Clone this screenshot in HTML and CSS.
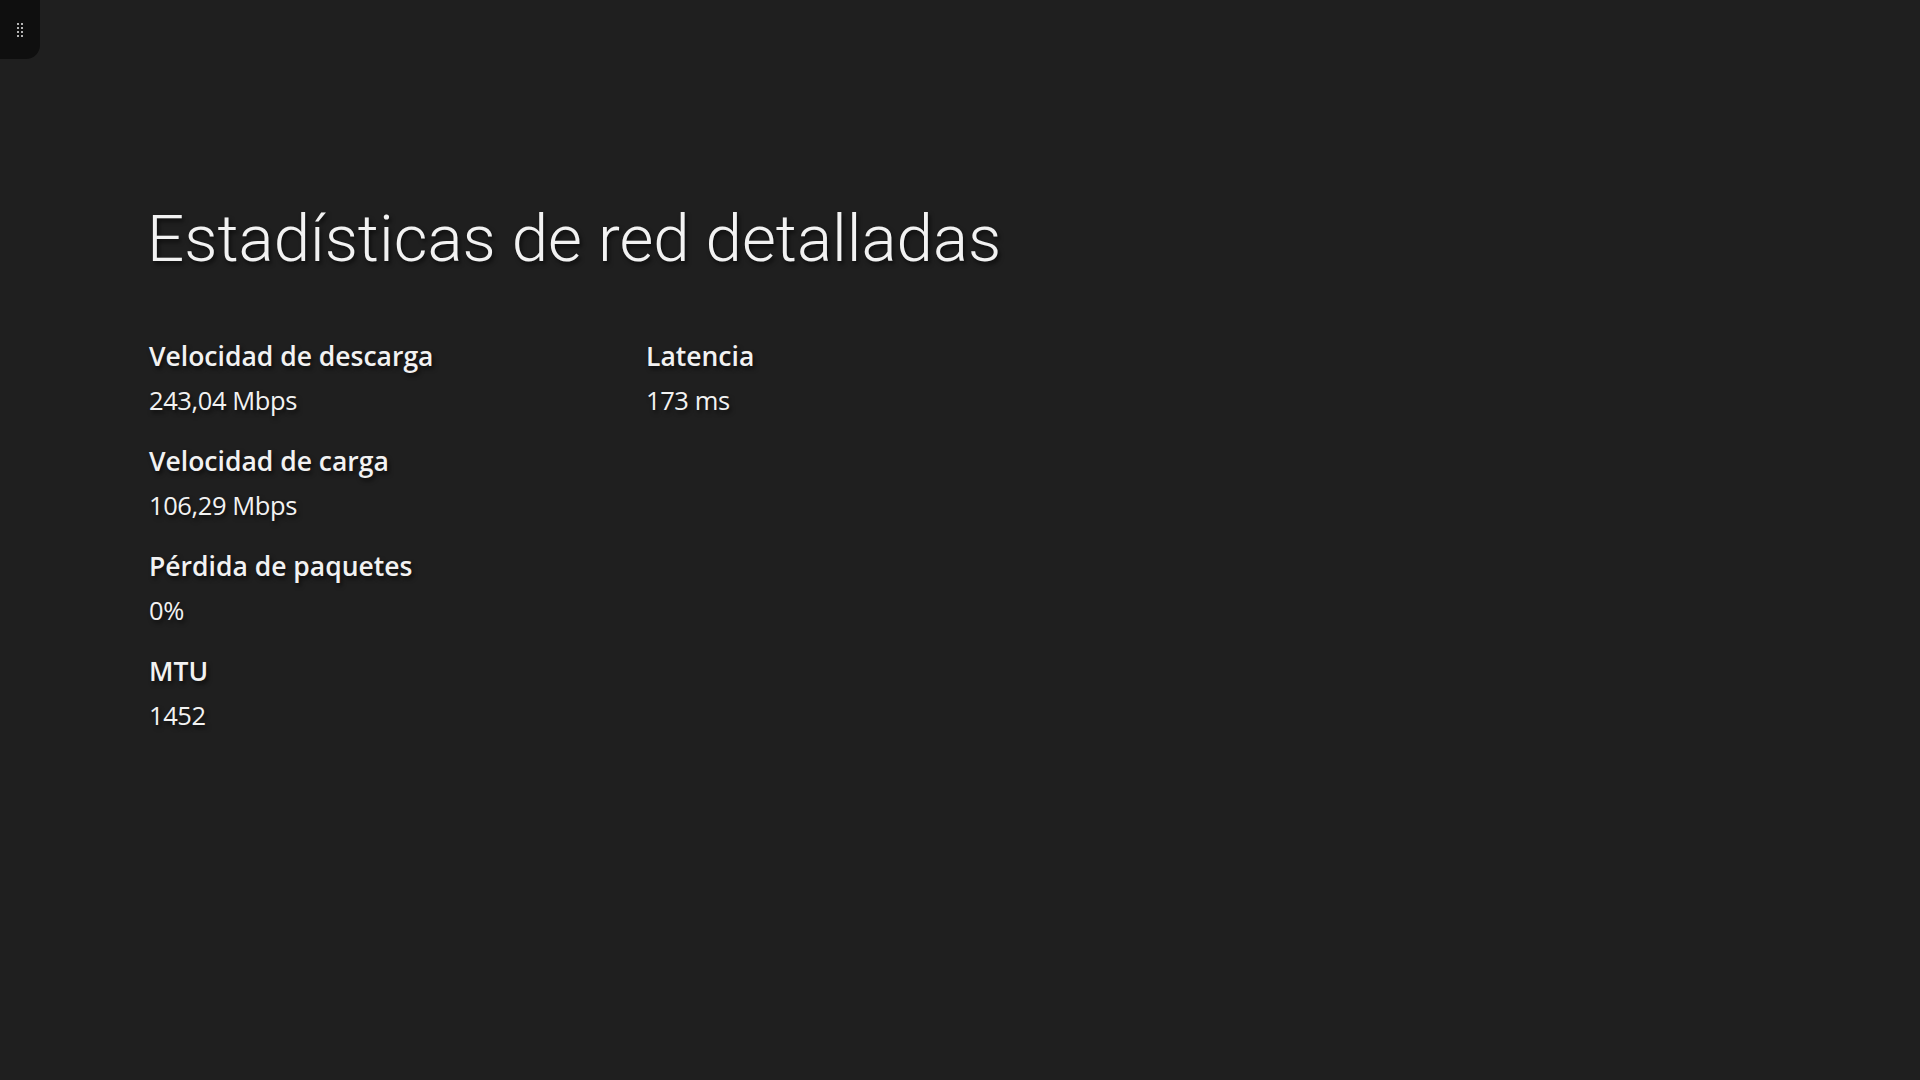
FILE: index.html
```html
<!DOCTYPE html>
<html lang="es">
<head>
  <meta charset="UTF-8">
  <title>Estadísticas de red detalladas</title>
  <link rel="stylesheet" href="styles.css">
</head>
<body>

  <!-- Griff oben links -->
  <div class="handle">
    <div class="dots">
      <span></span><span></span>
      <span></span><span></span>
      <span></span><span></span>
      <span></span><span></span>
    </div>
  </div>

  <main class="page">
    <h1>Estadísticas de red detalladas</h1>

    <div class="stats">
      <div class="col">
        <div class="stat">
          <div class="label">Velocidad de descarga</div>
          <div class="value">243,04 Mbps</div>
        </div>
        <div class="stat">
          <div class="label">Velocidad de carga</div>
          <div class="value">106,29 Mbps</div>
        </div>
        <div class="stat">
          <div class="label">Pérdida de paquetes</div>
          <div class="value">0%</div>
        </div>
        <div class="stat">
          <div class="label">MTU</div>
          <div class="value">1452</div>
        </div>
      </div>
      <div class="col">
        <div class="stat">
          <div class="label">Latencia</div>
          <div class="value">173 ms</div>
        </div>
      </div>
    </div>
  </main>

</body>
</html>
```

FILE: styles.css
```css
body {
  margin: 0;
  background: #1f1f1f;
  color: #f2f2f2;
  font-family: "Open Sans", "Noto Sans", sans-serif;
  min-height: 1080px;
}
.handle {
  position: absolute;
  top: 0;
  left: 0;
  width: 40px;
  height: 59px;
  background: #0f0f0f;
  border-bottom-right-radius: 14px;
  display: flex;
  align-items: center;
  justify-content: center;
}
.dots {
  display: grid;
  grid-template-columns: 2px 2px;
  gap: 2px;
}
.dots span {
  width: 2px;
  height: 2px;
  background: #b5b5b5;
}
.page {
  padding: 199px 0 0 147px;
}
h1 {
  margin: 0;
  font-family: Roboto, sans-serif;
  font-weight: 300;
  font-size: 65.5px;
  line-height: 80px;
  text-shadow: 2px 3px 4px rgba(0, 0, 0, 0.6);
}
.stats {
  display: flex;
  margin: 57px 0 0 2px;
}
.col {
  width: 497px;
  display: flex;
  flex-direction: column;
  gap: 17px;
}
.stat {
  text-shadow: 2px 3px 4px rgba(0, 0, 0, 0.6);
}
.label {
  font-weight: 600;
  font-size: 26.5px;
  line-height: 40px;
}
.value {
  font-size: 25.5px;
  line-height: 48px;
  font-weight: 400;
  letter-spacing: -0.4px;
}
```
